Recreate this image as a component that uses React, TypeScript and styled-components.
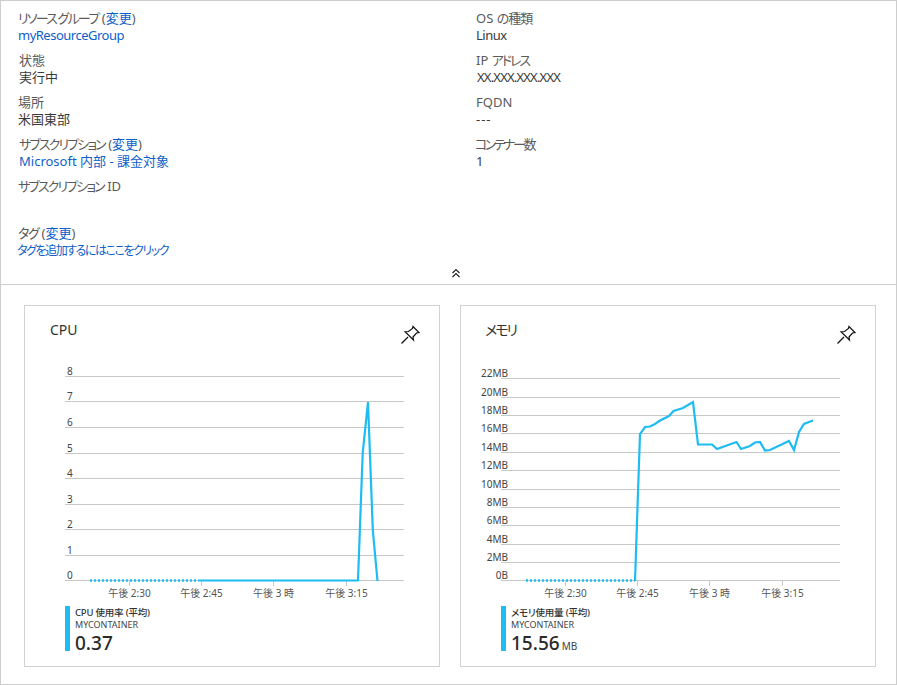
import React from 'react'
import styled, { createGlobalStyle } from 'styled-components'

const GlobalStyle = createGlobalStyle`
  html, body {
    margin: 0;
    padding: 0;
    background: #fff;
    font-family: "Noto Sans", "Noto Sans CJK JP", sans-serif;
    font-feature-settings: "palt";
  }
`

const Page = styled.div`
  box-sizing: border-box;
  width: 897px;
  height: 685px;
  border: 1px solid #cdcdcd;
  background: #fff;
`

const Details = styled.section`
  box-sizing: border-box;
  height: 284px;
  border-bottom: 1px solid #cdcdcd;
  padding-top: 9px;
  position: relative;
  display: grid;
  grid-template-columns: 457px 1fr;
`

const Column = styled.div<{ $left: number }>`
  padding-left: ${p => p.$left}px;
`

const Group = styled.div<{ $gap?: number }>`
  margin-bottom: ${p => p.$gap ?? 8}px;
`

const Label = styled.div<{ $nudge?: number }>`
  font-size: 13px;
  line-height: 17px;
  color: #5a5a5a;
  white-space: nowrap;
  margin-left: ${p => p.$nudge ?? 0}px;
`

const Value = styled.div<{ $nudge?: number; $small?: boolean }>`
  font-size: ${p => (p.$small ? 12 : 13)}px;
  line-height: 17px;
  color: #3a3a3a;
  white-space: nowrap;
  margin-left: ${p => p.$nudge ?? 0}px;
`

const Tight = styled.span<{ $by: number }>`
  letter-spacing: ${p => p.$by}px;
`

const Link = styled.a`
  color: #0f5fc9;
  text-decoration: none;
`

const Collapse = styled.button`
  position: absolute;
  left: 448px;
  top: 265px;
  width: 14px;
  height: 14px;
  padding: 0;
  border: 0;
  background: none;
  display: flex;
`

const Charts = styled.section`
  display: flex;
  gap: 20px;
  padding: 20px 0 0 23px;
`

const Card = styled.article`
  box-sizing: border-box;
  width: 416px;
  height: 362px;
  border: 1px solid #d2d2d2;
`

const CardHeader = styled.header<{ $left: number }>`
  height: 54px;
  box-sizing: border-box;
  padding: 14px 19px 0 ${p => p.$left}px;
  display: flex;
  justify-content: space-between;
`

const CardTitle = styled.h2`
  margin: 0;
  font-size: 14px;
  line-height: 20px;
  font-weight: 400;
  color: #333;
`

const PinIcon = styled.svg`
  width: 20px;
  height: 20px;
  margin-top: 5px;
`

const Plot = styled.svg`
  display: block;
  width: 414px;
  height: 240px;
`

const Legend = styled.div<{ $left: number }>`
  display: flex;
  margin: 6px 0 0 ${p => p.$left}px;
  height: 45px;
`

const LegendBar = styled.div`
  width: 5px;
  height: 45px;
  background: #1ebcf2;
`

const LegendText = styled.div`
  margin-left: 5px;
  padding-top: 1px;
`

const LegendTitle = styled.div`
  font-size: 9.5px;
  line-height: 12px;
  font-weight: 500;
  letter-spacing: -0.2px;
  color: #333;
  white-space: nowrap;
`

const LegendSub = styled.div`
  font-size: 9px;
  line-height: 11px;
  color: #444;
`

const Metric = styled.div`
  font-size: 19px;
  line-height: 26px;
  font-weight: 500;
  color: #2a2a2a;
`

const MetricUnit = styled.span`
  font-size: 10px;
  font-weight: 400;
  margin-left: 2px;
  color: #444;
`

type ChartData = {
  origin: number
  x0: number
  x1: number
  labelX: number
  labelAnchor: 'start' | 'end'
  grid: [string, number][]
  ticks: number[]
  dotted: string
  solid: string
}

const tickLabels = ['午後 2:30', '午後 2:45', '午後 3 時', '午後 3:15']

const cpu: ChartData = {
  origin: 25,
  x0: 65,
  x1: 404,
  labelX: 67,
  labelAnchor: 'start',
  grid: [
    ['8', 376.5], ['7', 401.5], ['6', 427.5], ['5', 453.5], ['4', 478.5],
    ['3', 504.5], ['2', 529.5], ['1', 555.5], ['0', 580.5],
  ],
  ticks: [129.5, 201.5, 273.5, 346.5],
  dotted: '90,580.5 198,580.5',
  solid: '198,580.5 358,580.5 362.7,453 368,402 372.8,530 377.5,581',
}

const memory: ChartData = {
  origin: 461,
  x0: 501,
  x1: 840,
  labelX: 508,
  labelAnchor: 'end',
  grid: [
    ['22MB', 378.5], ['20MB', 397.5], ['18MB', 415.5], ['16MB', 433.5],
    ['14MB', 452.5], ['12MB', 470.5], ['10MB', 489.5], ['8MB', 507.5],
    ['6MB', 525.5], ['4MB', 544.5], ['2MB', 562.5], ['0B', 580.5],
  ],
  ticks: [565.5, 637.5, 709.5, 782.5],
  dotted: '526,580.5 635,580.5',
  solid:
    '635,581 640,434 645,427 650,426.5 655,424 660,420.5 669,416 673.5,411 683,408 693,402 698,444.5 712,444.5 717,449 736.5,442 741,449 750,446 755,442.5 760,442 765,450.5 770,450 789,441 794,450 799,432 804,424 809,422 813,420.5',
}

function Chart({ data }: { data: ChartData }) {
  return (
    <Plot viewBox={`${data.origin} 360 414 240`}>
      {data.grid.map(([label, y]) => (
        <g key={label}>
          <line x1={data.x0} x2={data.x1} y1={y} y2={y} stroke="#c8c8c8" />
          <text x={data.labelX} y={y - 2} fontSize="10" fill="#444" textAnchor={data.labelAnchor}>
            {label}
          </text>
        </g>
      ))}
      {data.ticks.map((x, i) => (
        <g key={x}>
          <line x1={x} x2={x} y1={580} y2={586} stroke="#c8c8c8" />
          <text x={x} y={597} fontSize="10" fill="#555" textAnchor="middle">
            {tickLabels[i]}
          </text>
        </g>
      ))}
      <polyline points={data.dotted} fill="none" stroke="#1ebcf2" strokeWidth="2.4" strokeDasharray="2 2" />
      <polyline points={data.solid} fill="none" stroke="#1ebcf2" strokeWidth="2.2" />
    </Plot>
  )
}

function Pin() {
  return (
    <PinIcon viewBox="0 0 20 20" fill="none" stroke="#111" strokeWidth="1.2">
      <path d="M1.5 18.5L8 12" />
      <path d="M13 1.5L19 7.5L16.5 8L13 12L13.5 15L5 6.8L8.5 6.5L12.5 3.5Z" />
    </PinIcon>
  )
}

export default function App() {
  return (
    <Page>
      <GlobalStyle />
      <Details>
        <Column $left={17}>
          <Group>
            <Label><Tight $by={-1.8}>リソース グループ</Tight> (<Link>変更</Link>)</Label>
            <Value><Link><Tight $by={-0.5}>myResourceGroup</Tight></Link></Value>
          </Group>
          <Group>
            <Label $nudge={1}>状態</Label>
            <Value $nudge={1}>実行中</Value>
          </Group>
          <Group>
            <Label>場所</Label>
            <Value>米国東部</Value>
          </Group>
          <Group>
            <Label $nudge={1}><Tight $by={-1.9}>サブスクリプション</Tight> (<Link>変更</Link>)</Label>
            <Value $nudge={1}><Link>Microsoft 内部 - 課金対象</Link></Value>
          </Group>
          <Group $gap={13}>
            <Label><Tight $by={-1.9}>サブスクリプション</Tight> ID</Label>
            <Value>&nbsp;</Value>
          </Group>
          <Group>
            <Label><Tight $by={-1.5}>タグ</Tight> (<Link>変更</Link>)</Label>
            <Value $small $nudge={-1}><Link><Tight $by={-1.45}>タグを追加するにはここをクリック</Tight></Link></Value>
          </Group>
        </Column>
        <Column $left={18}>
          <Group>
            <Label>OS <Tight $by={-1}>の種類</Tight></Label>
            <Value><Tight $by={-0.5}>Linux</Tight></Value>
          </Group>
          <Group>
            <Label>IP <Tight $by={-2}>アドレス</Tight></Label>
            <Value $nudge={1}><Tight $by={-0.8}>XX.XXX.XXX.XXX</Tight></Value>
          </Group>
          <Group>
            <Label>FQDN</Label>
            <Value><Tight $by={1}>---</Tight></Value>
          </Group>
          <Group>
            <Label $nudge={-1}><Tight $by={-2.5}>コンテナー数</Tight></Label>
            <Value>1</Value>
          </Group>
        </Column>
        <Collapse aria-label="折りたたむ">
          <svg width="14" height="14" viewBox="0 0 14 14" fill="none" stroke="#222" strokeWidth="1.2">
            <path d="M3.5 7L7 3.5L10.5 7" />
            <path d="M3.5 11L7 7.5L10.5 11" />
          </svg>
        </Collapse>
      </Details>
      <Charts>
        <Card>
          <CardHeader $left={25}>
            <CardTitle>CPU</CardTitle>
            <Pin />
          </CardHeader>
          <Chart data={cpu} />
          <Legend $left={40}>
            <LegendBar />
            <LegendText>
              <LegendTitle>CPU 使用率 (平均)</LegendTitle>
              <LegendSub>MYCONTAINER</LegendSub>
              <Metric>0.37</Metric>
            </LegendText>
          </Legend>
        </Card>
        <Card>
          <CardHeader $left={24}>
            <CardTitle><Tight $by={-2}>メモリ</Tight></CardTitle>
            <Pin />
          </CardHeader>
          <Chart data={memory} />
          <Legend $left={40}>
            <LegendBar />
            <LegendText>
              <LegendTitle>メモリ使用量 (平均)</LegendTitle>
              <LegendSub>MYCONTAINER</LegendSub>
              <Metric>15.56<MetricUnit>MB</MetricUnit></Metric>
            </LegendText>
          </Legend>
        </Card>
      </Charts>
    </Page>
  )
}
